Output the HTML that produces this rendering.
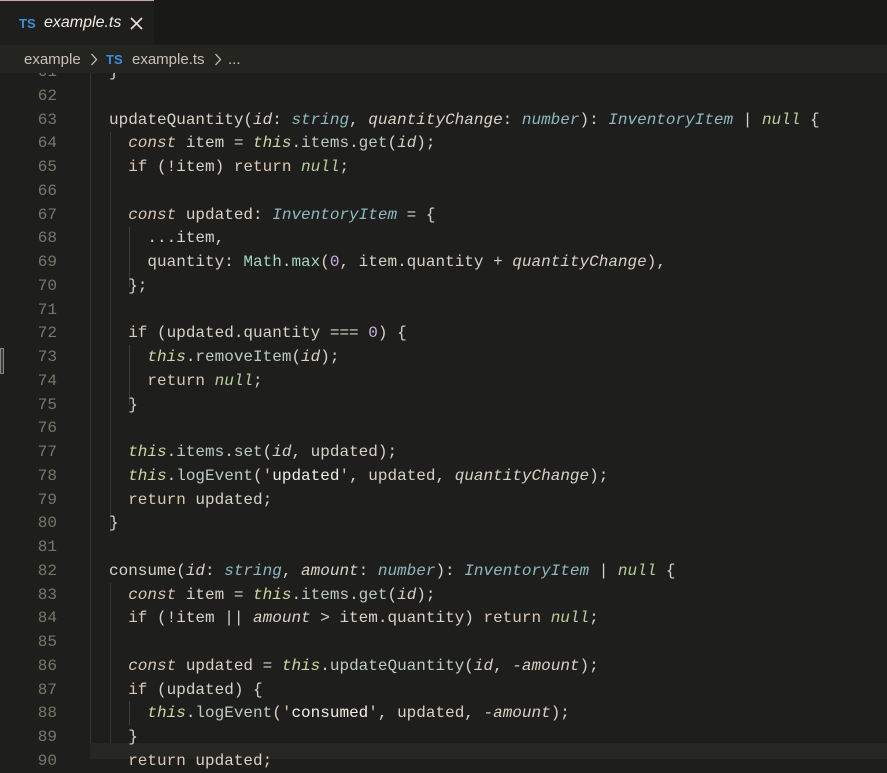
<!DOCTYPE html>
<html><head><meta charset="utf-8"><style>
*{margin:0;padding:0;box-sizing:border-box}
html,body{width:887px;height:759px}
body{background:#1e1f1c;overflow:hidden;position:relative;font-family:"Liberation Mono",monospace;color:#d8d2c6}
.tabbar{position:absolute;left:0;top:0;width:887px;height:45px;background:#191a17}
.tab{position:absolute;left:0;top:0;width:154px;height:45px;background:#1e1f1c;border-top:1px solid #c9a6a6;font-family:"Liberation Sans",sans-serif}
.ts{color:#3b8fd9;font-weight:bold;font-family:"Liberation Sans",sans-serif;font-size:13px}
.crumb{position:absolute;left:0;top:45px;width:887px;height:28px;background:#242521;font-family:"Liberation Sans",sans-serif;font-size:15px;color:#c8c2b6}
.ln{position:absolute;left:0;width:57px;text-align:right;font-size:16px;color:#7b7768;line-height:24px}
.code{position:absolute;left:109px;font-size:16px;white-space:pre;line-height:24px}
.k{color:#dcc6b6}.ki{color:#dcc6b6;font-style:italic}
.th{color:#cfd7a0;font-style:italic}.ty{color:#8fb8c0;font-style:italic}
.nu{color:#b8cf9a;font-style:italic}.m{color:#bcc9c6}.mt{color:#a6d6bc}
.p{font-style:italic}.n{color:#c8b0e0}.s{color:#f2eee4}.q{color:#e0c0a0}.b{color:#d8d2c6}
.g{position:absolute;width:1px;background:#34352f}
</style></head><body>
<div class="g" style="left:90px;top:73px;height:686px"></div>
<div class="g" style="left:110px;top:132px;height:400px"></div>
<div class="g" style="left:129px;top:227px;height:60px;background:#3d3e38"></div>
<div class="g" style="left:129px;top:345px;height:60px;background:#3d3e38"></div>
<div class="g" style="left:110px;top:583px;height:170px"></div>
<div class="g" style="left:129px;top:701px;height:24px;background:#3d3e38"></div>
<div style="position:absolute;left:90px;top:743px;width:797px;height:16px;background:#262723"></div>
<div style="position:absolute;left:0;top:348px;width:4px;height:26px;border:1px solid #8a8580;background:#3a3a36"></div>
<div id="lines"></div>
<div class="tabbar"><div class="tab">
<span class="ts" style="position:absolute;left:19px;top:15px">TS</span>
<span style="position:absolute;left:44px;top:13px;font-style:italic;font-size:16px;color:#f0ece4">example.ts</span>
<svg style="position:absolute;left:130px;top:16px" width="13" height="13" viewBox="0 0 13 13"><path d="M1 1L12 12M12 1L1 12" stroke="#e8e4dc" stroke-width="1.6"/></svg>
</div></div>
<div class="crumb">
<span style="position:absolute;left:24px;top:6px">example</span>
<svg style="position:absolute;left:90px;top:8px" width="8" height="13" viewBox="0 0 8 13"><path d="M1.5 1L6.5 6.5L1.5 12" stroke="#c8c2b6" stroke-width="1.3" fill="none"/></svg>
<span class="ts" style="position:absolute;left:106px;top:7px">TS</span>
<span style="position:absolute;left:132px;top:6px">example.ts</span>
<svg style="position:absolute;left:214px;top:8px" width="8" height="13" viewBox="0 0 8 13"><path d="M1.5 1L6.5 6.5L1.5 12" stroke="#c8c2b6" stroke-width="1.3" fill="none"/></svg>
<span style="position:absolute;left:228px;top:6px">...</span>
</div>
<script>
var L={
61:'}',
62:'',
63:'updateQuantity(<span class="p">id</span>: <span class="ty">string</span>, <span class="p">quantityChange</span>: <span class="ty">number</span>): <span class="ty">InventoryItem</span> | <span class="nu">null</span> {',
64:'  <span class="ki">const</span> item = <span class="th">this</span>.<span class="m">items</span>.<span class="m">get</span>(<span class="p">id</span>);',
65:'  <span class="k">if</span> (!item) <span class="k">return</span> <span class="nu">null</span>;',
66:'',
67:'  <span class="ki">const</span> updated: <span class="ty">InventoryItem</span> = {',
68:'    ...item,',
69:'    quantity: <span class="mt">Math</span>.<span class="mt">max</span>(<span class="n">0</span>, item.quantity + <span class="p">quantityChange</span>),',
70:'  };',
71:'',
72:'  <span class="k">if</span> (updated.quantity === <span class="n">0</span>) {',
73:'    <span class="th">this</span>.<span class="m">removeItem</span>(<span class="p">id</span>);',
74:'    <span class="k">return</span> <span class="nu">null</span>;',
75:'  }',
76:'',
77:'  <span class="th">this</span>.<span class="m">items</span>.<span class="m">set</span>(<span class="p">id</span>, updated);',
78:'  <span class="th">this</span>.<span class="m">logEvent</span>(<span class="q">\'</span><span class="s">updated</span><span class="q">\'</span>, updated, <span class="p">quantityChange</span>);',
79:'  <span class="k">return</span> updated;',
80:'}',
81:'',
82:'consume(<span class="p">id</span>: <span class="ty">string</span>, <span class="p">amount</span>: <span class="ty">number</span>): <span class="ty">InventoryItem</span> | <span class="nu">null</span> {',
83:'  <span class="ki">const</span> item = <span class="th">this</span>.<span class="m">items</span>.<span class="m">get</span>(<span class="p">id</span>);',
84:'  <span class="k">if</span> (!item || <span class="p">amount</span> &gt; item.quantity) <span class="k">return</span> <span class="nu">null</span>;',
85:'',
86:'  <span class="ki">const</span> updated = <span class="th">this</span>.<span class="m">updateQuantity</span>(<span class="p">id</span>, -<span class="p">amount</span>);',
87:'  <span class="k">if</span> (updated) {',
88:'    <span class="th">this</span>.<span class="m">logEvent</span>(<span class="q">\'</span><span class="s">consumed</span><span class="q">\'</span>, updated, -<span class="p">amount</span>);',
89:'  }',
90:'  <span class="k">return</span> updated;'
};
var h='';
for(var n=61;n<=90;n++){var t=84+(n-62)*23.74;
h+='<div class="ln" style="top:'+t+'px">'+n+'</div><div class="code" style="top:'+t+'px">'+L[n]+'</div>';}
document.getElementById('lines').innerHTML=h;
</script>
</body></html>
